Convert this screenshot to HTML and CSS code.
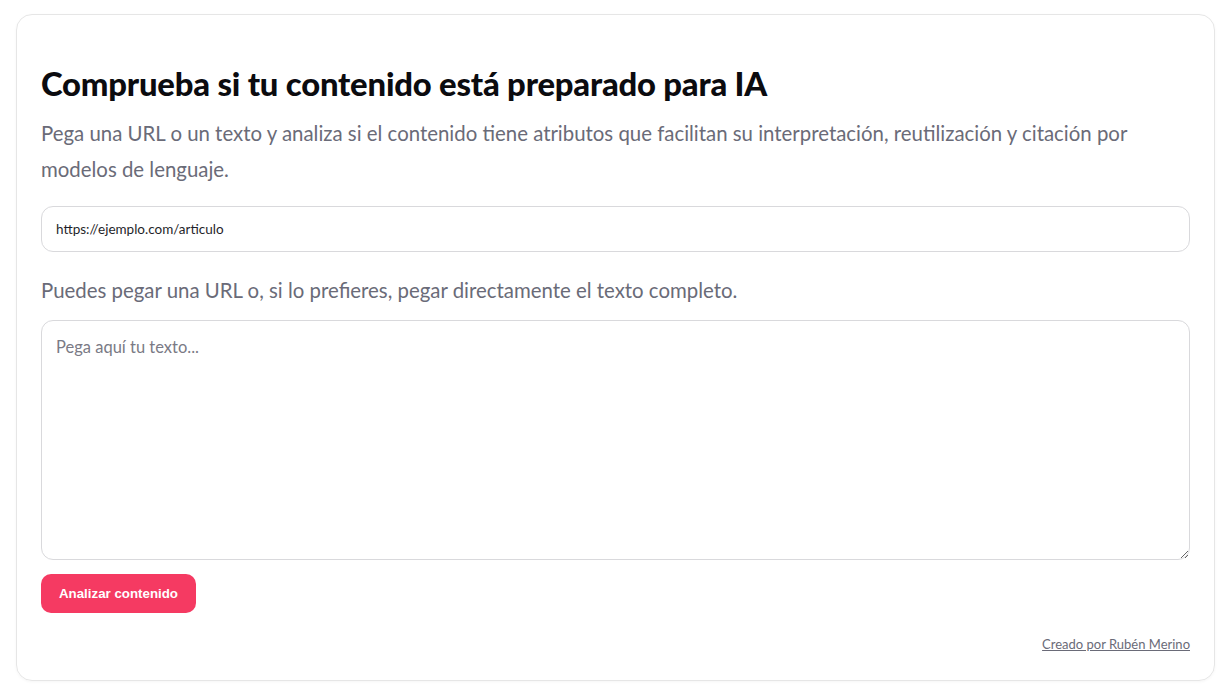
FILE: index.html
```html
<!DOCTYPE html>
<html lang="es">
<head>
<meta charset="utf-8">
<link rel="stylesheet" href="styles.css">
</head>
<body>
<main class="card">
  <h1 class="title">Comprueba si tu contenido está preparado para IA</h1>
  <p class="lead">Pega una URL o un texto y analiza si el contenido tiene atributos que facilitan su interpretación, reutilización y citación por modelos de lenguaje.</p>
  <input class="url" type="text" value="https://ejemplo.com/articulo">
  <p class="hint">Puedes pegar una URL o, si lo prefieres, pegar directamente el texto completo.</p>
  <textarea class="text" placeholder="Pega aquí tu texto..."></textarea>
  <button class="btn" type="button">Analizar contenido</button>
  <div class="footer"><a class="credit" href="#">Creado por Rubén Merino</a></div>
</main>
</body>
</html>
```

FILE: styles.css
```css
* { box-sizing: border-box; }
html, body { margin: 0; background: #fff; }
body { padding: 14px 16px 15px; font-family: Lato, "Noto Sans", sans-serif; }
.card {
  display: flex;
  flex-direction: column;
  height: 667px;
  border: 1px solid #e6e6e6;
  border-radius: 16px;
  padding: 47px 24px 28px;
  box-shadow: 0 1px 3px rgba(0,0,0,0.04);
}
.title {
  margin: 0;
  font-family: Lato, sans-serif;
  font-weight: 900;
  font-size: 32.8px;
  line-height: 44px;
  color: #0b0b0f;
  letter-spacing: -0.2px;
}
.lead {
  margin: 9px 0 0;
  font-size: 20.4px;
  line-height: 36px;
  color: #6a6b78;
}
.url {
  margin-top: 19px;
  height: 46px;
  width: 100%;
  border: 1px solid #d9d9dc;
  border-radius: 12px;
  padding: 0 14px;
  font-family: Lato, sans-serif;
  font-size: 13.5px;
  color: #1f1f2a;
  outline: none;
}
.hint {
  margin: 20px 0 0;
  font-size: 20.4px;
  line-height: 36px;
  color: #6a6b78;
}
.text {
  margin-top: 12px;
  height: 240px;
  width: 100%;
  border: 1px solid #d9d9dc;
  border-radius: 12px;
  padding: 16px 14px;
  font-family: Lato, sans-serif;
  font-size: 16.5px;
  resize: vertical;
  outline: none;
}
.text::placeholder { color: #7a7a85; }
.btn {
  align-self: flex-start;
  margin-top: 14px;
  height: 39px;
  padding: 0 18px;
  border: 0;
  border-radius: 10px;
  background: #f53a62;
  color: #fff;
  font-family: "Liberation Sans", Arial, sans-serif;
  font-weight: 700;
  font-size: 13.3px;
}
.footer {
  margin-top: auto;
  display: flex;
  justify-content: flex-end;
}
.credit {
  font-size: 13px;
  color: #6a6b78;
  text-decoration: underline;
}
```
